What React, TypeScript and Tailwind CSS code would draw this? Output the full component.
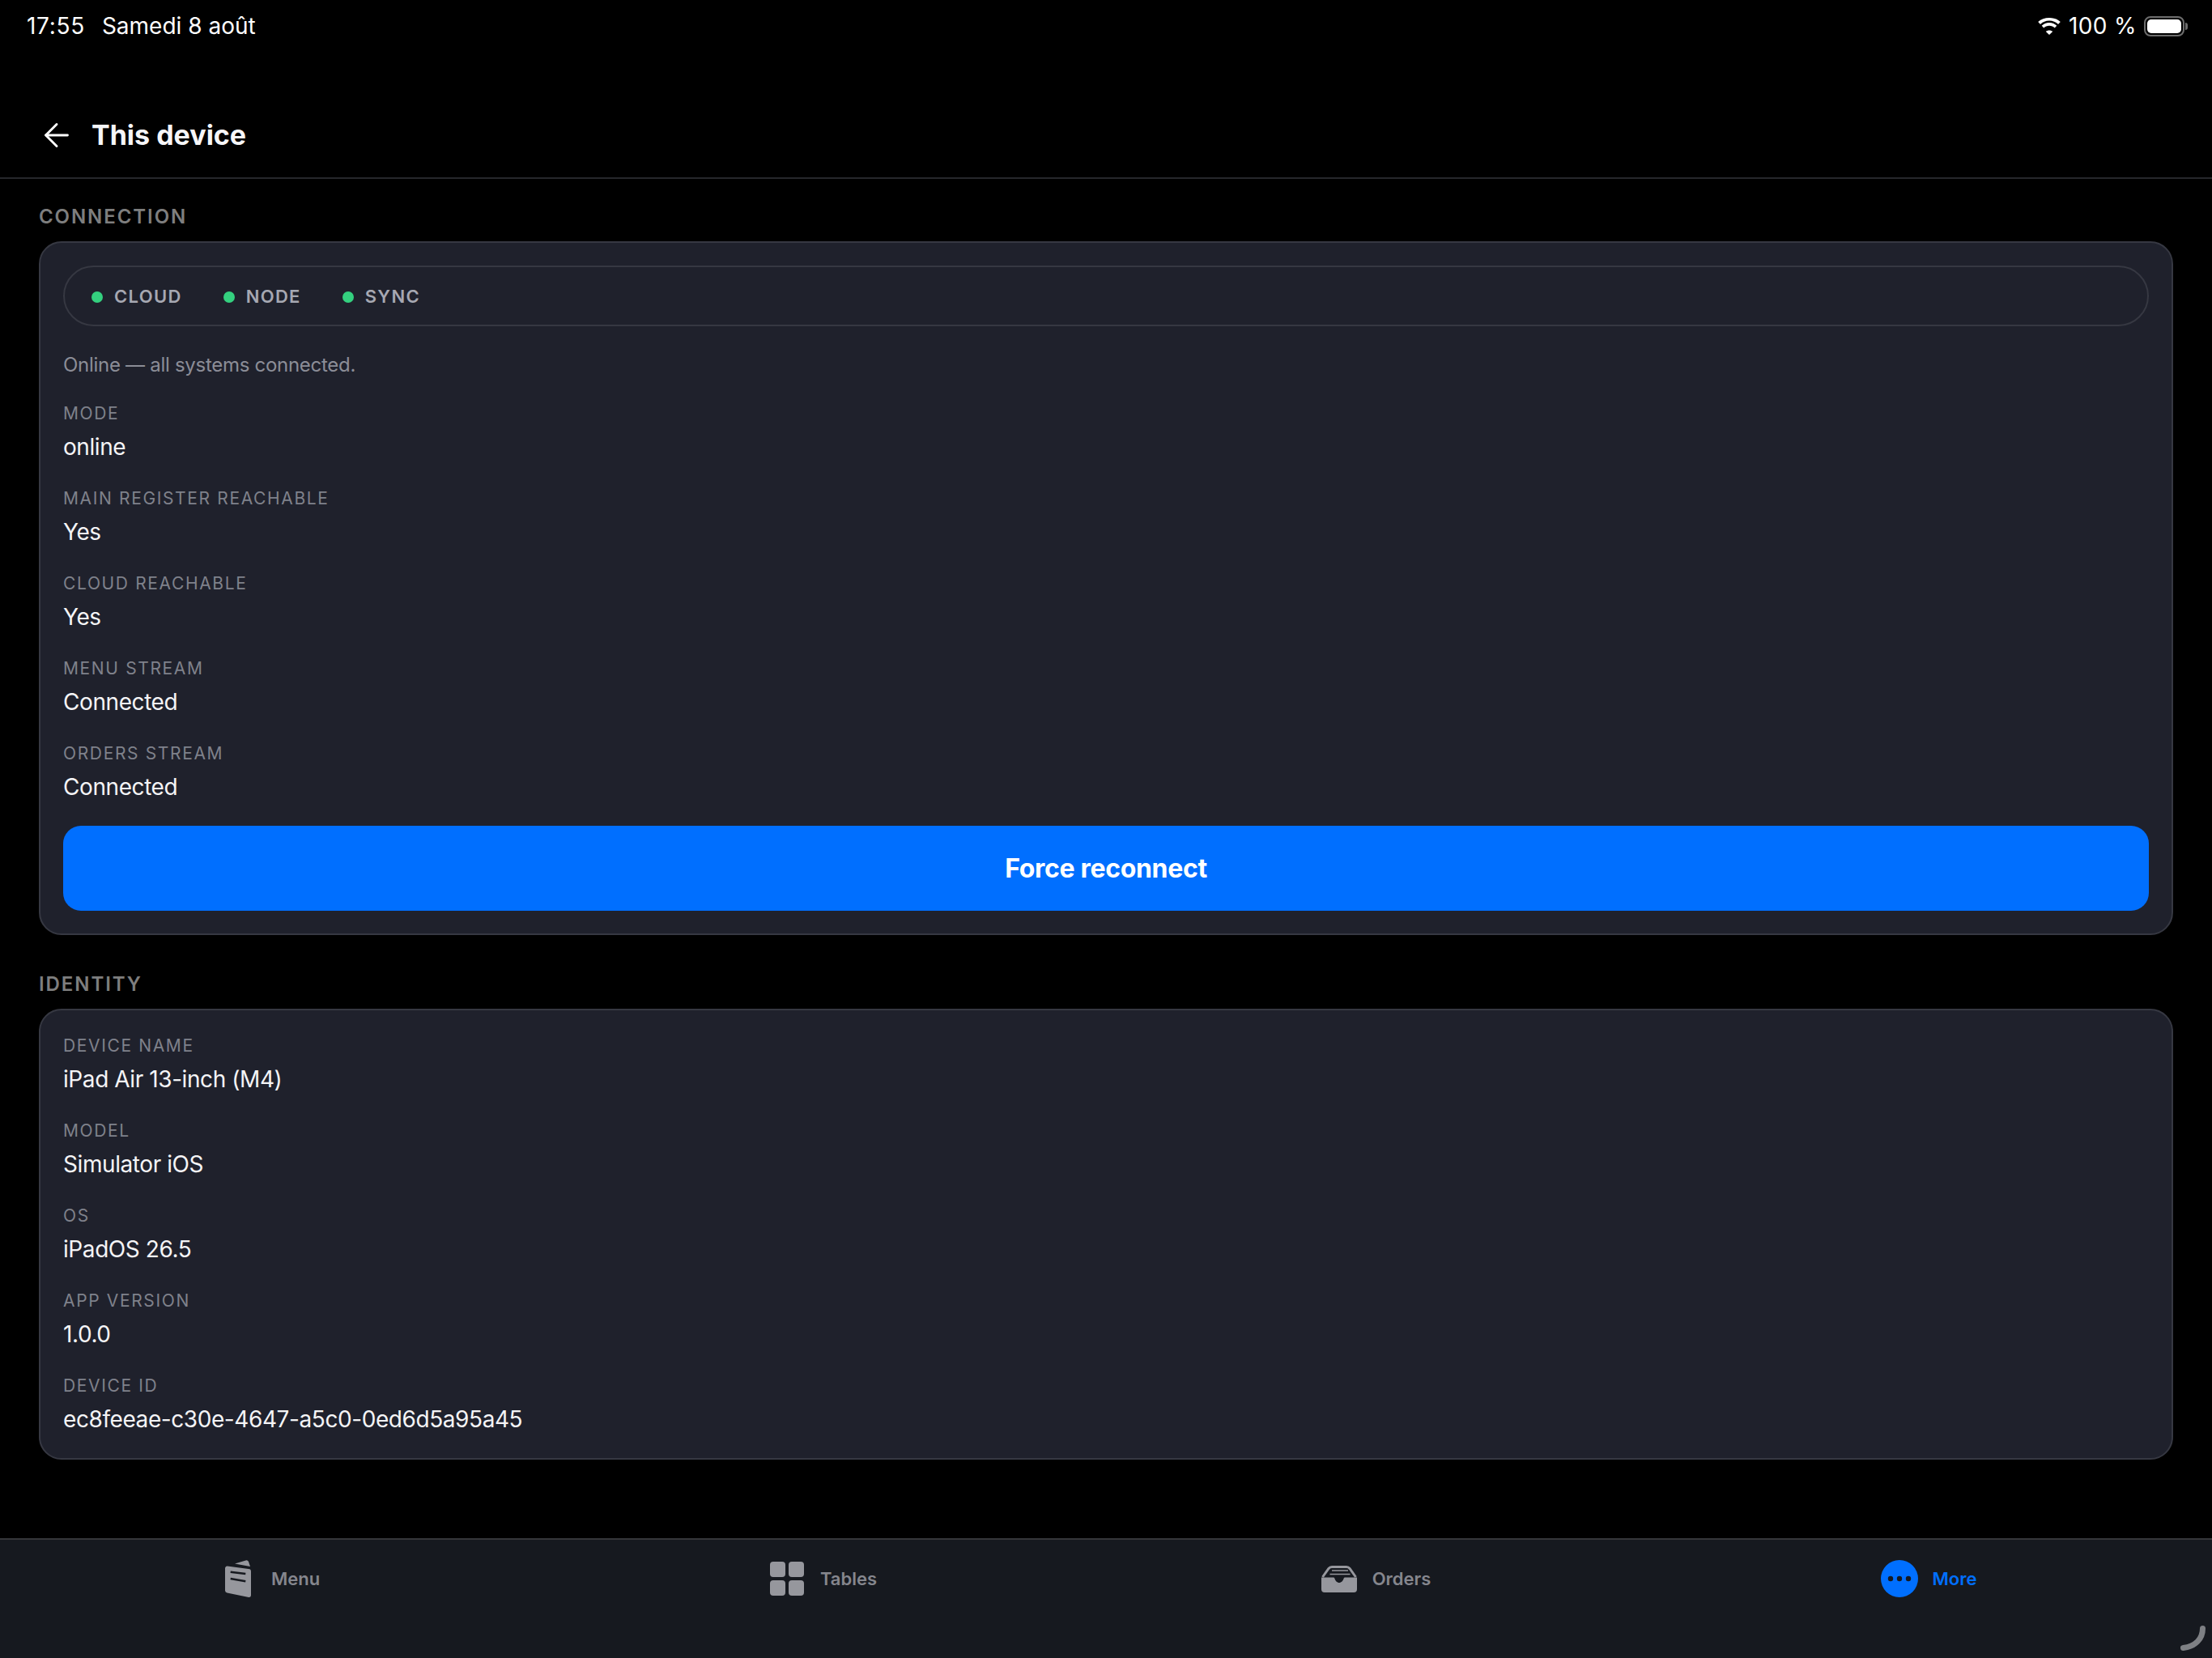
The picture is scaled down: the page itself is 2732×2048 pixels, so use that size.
import { ArrowLeft } from "lucide-react";

const connectionFields = [
  { label: "Mode", value: "online" },
  { label: "Main register reachable", value: "Yes" },
  { label: "Cloud reachable", value: "Yes" },
  { label: "Menu stream", value: "Connected" },
  { label: "Orders stream", value: "Connected" },
];

const identityFields = [
  { label: "Device name", value: "iPad Air 13-inch (M4)" },
  { label: "Model", value: "Simulator iOS" },
  { label: "OS", value: "iPadOS 26.5" },
  { label: "App version", value: "1.0.0" },
  { label: "Device ID", value: "ec8feeae-c30e-4647-a5c0-0ed6d5a95a45" },
];

function Field({ label, value }: { label: string; value: string }) {
  return (
    <div>
      <div className="h-[28px] text-[21px] leading-[28px] uppercase tracking-[0.078em] text-[#7f818b]">
        {label}
      </div>
      <div className="mt-[9px] h-[36px] text-[28px] leading-[36px] tracking-[-0.015em] text-[#f4f4f6]">{value}</div>
    </div>
  );
}

function StatusDot({ label }: { label: string }) {
  return (
    <div className="flex items-center gap-[14px]">
      <span className="w-[14px] h-[14px] rounded-full bg-[#34d07f]" />
      <span className="text-[22px] font-semibold tracking-[0.06em] text-[#a6a8b2]">{label}</span>
    </div>
  );
}

function MenuIcon() {
  return (
    <svg width="46" height="46" viewBox="0 0 46 46" fill="#96979d">
      <path d="M7 10.500a3 3 0 0 1 2.700-3L36 11a3 3 0 0 1 3 3v29.500a2.400 2.400 0 0 1-2.800 2.400L9.500 40.500a3 3 0 0 1-2.500-3Z" />
      <path d="M19 4.500 32.500.5a3 3 0 0 1 3.500 1.500L38 8Z" />
      <path d="M13.700 14.700 32.300 17M13.700 23l18.600 3.300" stroke="#16191f" strokeWidth="2.400" fill="none" />
    </svg>
  );
}

function TablesIcon() {
  return (
    <svg width="46" height="46" viewBox="0 0 46 46" fill="#96979d">
      <rect x="2" y="2" width="19" height="19" rx="4" />
      <rect x="25" y="2" width="19" height="19" rx="4" />
      <rect x="2" y="25" width="19" height="19" rx="4" />
      <rect x="25" y="25" width="19" height="19" rx="4" />
    </svg>
  );
}

function OrdersIcon() {
  return (
    <svg width="46" height="46" viewBox="0 0 46 46" fill="#96979d">
      <path d="M1 21.500h15c.7 0 1 .4 1.300 1 .8 3 3 5.500 5.700 5.500s4.900-2.500 5.700-5.500c.3-.6.600-1 1.300-1H45V36a4 4 0 0 1-4 4H5a4 4 0 0 1-4-4Z" />
      <path
        d="M2.500 21 10 10.500A5 5 0 0 1 14 8.500h18a5 5 0 0 1 4 2L43.500 21"
        fill="none"
        stroke="#96979d"
        strokeWidth="3"
      />
      <path d="M14 13h20M11.500 17.500h25" stroke="#96979d" strokeWidth="1.700" fill="none" />
    </svg>
  );
}

function MoreIcon() {
  return (
    <svg width="46" height="46" viewBox="0 0 46 46">
      <circle cx="23" cy="23" r="23" fill="#006fff" />
      <circle cx="12" cy="23" r="3.200" fill="#16191f" />
      <circle cx="23" cy="23" r="3.200" fill="#16191f" />
      <circle cx="34" cy="23" r="3.200" fill="#16191f" />
    </svg>
  );
}

function TabItem({ icon, label, active }: { icon: React.ReactNode; label: string; active?: boolean }) {
  return (
    <div className="flex items-center justify-center gap-[18px] pr-[17px]">
      {icon}
      <span className={`text-[22px] font-semibold ${active ? "text-[#006fff]" : "text-[#85868d]"}`}>{label}</span>
    </div>
  );
}

export default function App() {
  return (
    <div
      className="relative w-[2732px] h-[2048px] bg-black text-white flex flex-col overflow-hidden"
      style={{ fontFamily: "Inter, sans-serif" }}
    >
      {/* status bar */}
      <div className="h-[64px] flex items-center justify-between pl-[33px] pr-[30px] text-[28px] text-white">
        <div className="flex items-center gap-[21px]">
          <span className="tracking-[0.7px]">17:55</span>
          <span>Samedi 8 août</span>
        </div>
        <div className="flex items-center">
          <svg width="30" height="21" viewBox="0 0 30 21" fill="white">
            <path d="M15 3.500c4.300 0 8.200 1.700 11 4.400l2.800-2.900C25.100 1.400 20.300 0 15 0S4.900 1.400 1.200 5L4 7.900c2.800-2.700 6.700-4.400 11-4.400Z" />
            <path d="M15 9.800c2.600 0 5 1 6.700 2.700l2.600-2.800C21.900 7.400 18.600 6 15 6s-6.900 1.400-9.300 3.700l2.600 2.800C10 10.800 12.400 9.800 15 9.800Z" />
            <path d="M15 15.500c-1.700 0-3 .5-4.200 1.500L15 21l4.200-4c-1.200-1-2.500-1.500-4.200-1.500Z" />
          </svg>
          <span className="ml-[9px] mr-[9px] tracking-[0.4px]">100 %</span>
          <div className="flex items-center">
            <div className="w-[50px] h-[25px] rounded-[8px] border-2 border-[#6d6d6d] p-[2px]">
              <div className="w-full h-full rounded-[5px] bg-white" />
            </div>
            <div className="ml-[1px] w-[3px] h-[9px] rounded-r-full bg-[#6d6d6d]" />
          </div>
        </div>
      </div>

      {/* header */}
      <div className="h-[157px] border-b-2 border-[#26272b] flex items-center pt-[51px] pl-[47px]">
        <ArrowLeft size={46} strokeWidth={1.5} />
        <h1 className="ml-[20px] text-[34px] leading-[44px] font-bold text-[#f6f6f8]">This device</h1>
      </div>

      {/* content */}
      <div className="flex-1 px-[48px] pt-[31px]">
        <div className="h-[32px] text-[24px] leading-[32px] font-semibold uppercase tracking-[0.08em] text-[#7e7e7e]">
          Connection
        </div>
        <div className="mt-[14px] rounded-[28px] border-2 border-[#363842] bg-[#1f212c] px-[28px] pt-[28px] pb-[28px]">
          <div className="h-[75px] rounded-full border-2 border-[#363842] flex items-center gap-[51px] pl-[33px] pt-[2px]">
            <StatusDot label="CLOUD" />
            <StatusDot label="NODE" />
            <StatusDot label="SYNC" />
          </div>
          <p className="mt-[32px] h-[32px] text-[24px] leading-[32px] tracking-[-0.012em] text-[#8b8d97]">
            Online — all systems connected.
          </p>
          <div className="mt-[30px] flex flex-col gap-[32px]">
            {connectionFields.map((f) => (
              <Field key={f.label} label={f.label} value={f.value} />
            ))}
          </div>
          <button className="mt-[30px] w-full h-[105px] rounded-[22px] bg-[#006fff] text-[32px] font-bold tracking-[-0.01em] text-white">
            Force reconnect
          </button>
        </div>

        <div className="mt-[45px] h-[32px] text-[24px] leading-[32px] font-semibold uppercase tracking-[0.08em] text-[#7e7e7e]">
          Identity
        </div>
        <div className="mt-[14px] rounded-[28px] border-2 border-[#363842] bg-[#1f212c] px-[28px] pt-[30px] pb-[30px]">
          <div className="flex flex-col gap-[32px]">
            {identityFields.map((f) => (
              <Field key={f.label} label={f.label} value={f.value} />
            ))}
          </div>
        </div>
      </div>

      {/* tab bar */}
      <div className="h-[148px] border-t-2 border-[#35363a] bg-[#16191f] grid grid-cols-4 pb-[50px]">
        <TabItem icon={<MenuIcon />} label="Menu" />
        <TabItem icon={<TablesIcon />} label="Tables" />
        <TabItem icon={<OrdersIcon />} label="Orders" />
        <TabItem icon={<MoreIcon />} label="More" active />
      </div>

      {/* window resize handle */}
      <svg className="absolute left-[2690px] top-[2005px]" width="38" height="38" viewBox="0 0 38 38" fill="none">
        <path d="M30.500 6.500c0 13-9 22-24 24" stroke="#7e8084" strokeWidth="7" strokeLinecap="round" />
      </svg>
    </div>
  );
}
